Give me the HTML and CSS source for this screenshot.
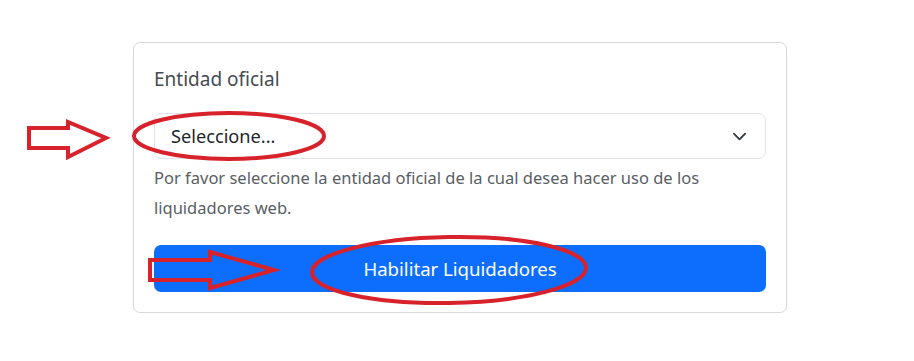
FILE: index.html
```html
<!DOCTYPE html>
<html lang="es">
<head>
<meta charset="utf-8">
<link rel="stylesheet" href="styles.css">
</head>
<body>
<div class="page">
  <div class="card">
    <label class="label">Entidad oficial</label>
    <div class="select">
      <span class="select-text">Seleccione...</span>
      <svg class="chevron" viewBox="0 0 16 16" width="16" height="16"><path d="M2 5l6 6 6-6" fill="none" stroke="#343a40" stroke-width="2" stroke-linecap="round" stroke-linejoin="round"/></svg>
    </div>
    <p class="help">Por favor seleccione la entidad oficial de la cual desea hacer uso de los liquidadores web.</p>
    <button class="btn">Habilitar Liquidadores</button>
  </div>
</div>
<svg class="marks" width="914" height="361" viewBox="0 0 914 361">
  <g fill="none" stroke="#d7222c" stroke-width="4" stroke-linejoin="miter">
    <path d="M29 128 H68 V122 L106 138 L68 157 V148 H29 Z" fill="#fff"/>
    <ellipse cx="229" cy="136" rx="95" ry="23"/>
    <path d="M150 260 H210 V252 L274 270 L210 288 V280 H150 Z"/>
    <ellipse cx="449" cy="270" rx="137" ry="33" transform="rotate(-1 449 270)"/>
  </g>
</svg>
</body>
</html>
```
FILE: styles.css
```css
html, body {
  margin: 0;
  padding: 0;
  background: #fff;
}
body {
  font-family: "Noto Sans", "Open Sans", sans-serif;
  width: 914px;
  height: 361px;
  overflow: hidden;
  position: relative;
}
.page {
  padding-top: 42px;
  padding-left: 133px;
}
.card {
  width: 612px;
  border: 1px solid #d9d9d9;
  border-radius: 7px;
  padding: 22px 20px 20px 20px;
  display: flex;
  flex-direction: column;
}
.label {
  font-size: 19px;
  line-height: 28px;
  color: #454a54;
  margin-bottom: 20px;
}
.select {
  height: 46px;
  box-sizing: border-box;
  border: 1px solid #e0e3e7;
  border-radius: 7px;
  display: flex;
  align-items: center;
  justify-content: space-between;
  padding: 0 18px 0 16px;
}
.select-text {
  font-size: 18.2px;
  color: #212529;
}
.chevron {
  width: 15px;
  height: 15px;
}
.help {
  margin: 4px 0 22px 0;
  font-size: 16.5px;
  line-height: 30px;
  color: #595e64;
  padding-right: 50px;
}
.btn {
  height: 47px;
  border: none;
  border-radius: 7px;
  background: #0d6efd;
  color: #fff;
  font-family: inherit;
  font-size: 18.6px;
  padding: 0;
}
.marks {
  position: absolute;
  left: 0;
  top: 0;
  pointer-events: none;
}
```
